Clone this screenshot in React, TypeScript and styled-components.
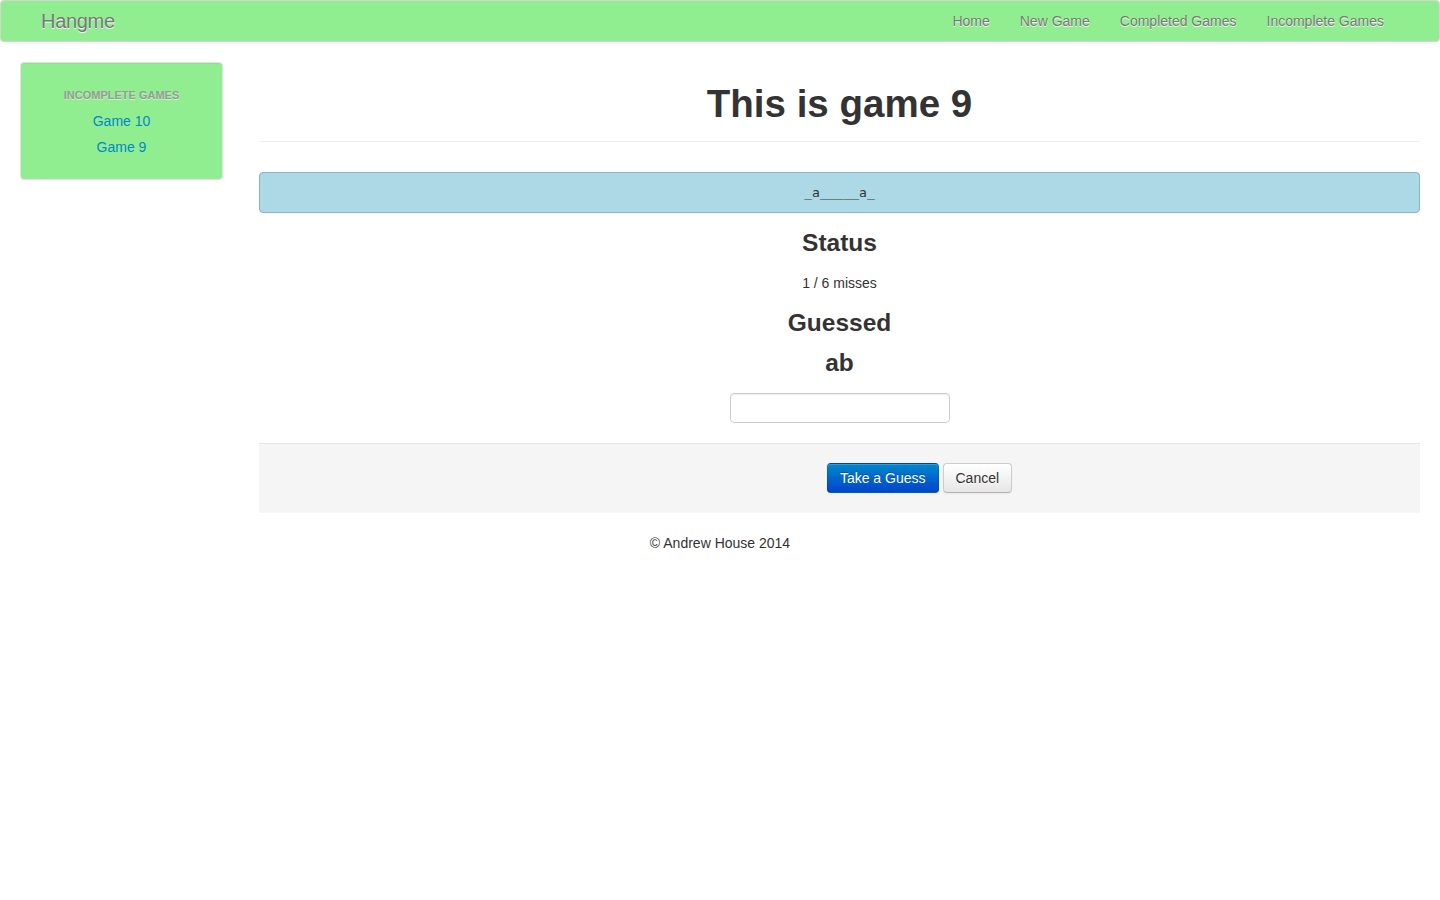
import React from "react";
import styled, { createGlobalStyle } from "styled-components";

const GlobalStyle = createGlobalStyle`
  html, body { margin: 0; padding: 0; background: #fff; }
  body {
    font-family: "Liberation Sans", Arial, "Helvetica Neue", Helvetica, sans-serif;
    font-size: 14px;
    line-height: 20px;
    color: #333;
  }
  * { box-sizing: border-box; }
`;

const Navbar = styled.div`
  height: 42px;
  background: #90ee90;
  border: 1px solid #d4d4d4;
  border-radius: 4px;
  box-shadow: 0 1px 4px rgba(0, 0, 0, 0.065);
  display: flex;
  align-items: center;
  justify-content: space-between;
  padding: 0 40px;
`;

const Brand = styled.a`
  font-size: 20px;
  font-weight: 300;
  line-height: 20px;
  color: #777;
  text-shadow: 0 1px 0 #fff;
  text-decoration: none;
  padding: 10px 0;
  letter-spacing: -0.3px;
`;

const NavList = styled.ul`
  list-style: none;
  margin: 0;
  padding: 0;
  display: flex;
`;

const NavLink = styled.a`
  display: block;
  padding: 10px 15px;
  font-size: 14px;
  line-height: 20px;
  color: #777;
  text-shadow: 0 1px 0 #fff;
  text-decoration: none;
`;

const Container = styled.div`
  display: grid;
  grid-template-columns: 203px 1fr;
  column-gap: 36px;
  padding: 20px 20px 0;
`;

const Well = styled.div`
  align-self: start;
  background: #90ee90;
  border: 1px solid #e3e3e3;
  border-radius: 4px;
  box-shadow: inset 0 1px 1px rgba(0, 0, 0, 0.05);
  padding: 19px 0;
`;

const SideList = styled.ul`
  list-style: none;
  margin: 0;
  padding: 0;
  text-align: center;
`;

const SideHeader = styled.li`
  padding: 3px 15px;
  font-size: 11px;
  font-weight: bold;
  line-height: 20px;
  color: #999;
  text-shadow: 0 1px 0 rgba(255, 255, 255, 0.5);
  text-transform: uppercase;
`;

const SideLink = styled.a`
  display: block;
  padding: 3px 15px;
  color: #0088cc;
  text-decoration: none;
  font-size: 14px;
  line-height: 20px;
`;

const Main = styled.div`
  text-align: center;
`;

const PageHeader = styled.div`
  margin: 22px 0 30px;
  padding-bottom: 17px;
  border-bottom: 1px solid #eee;
`;

const Title = styled.h1`
  margin: 0;
  font-size: 38.5px;
  line-height: 40px;
  font-weight: bold;
  color: #333;
`;

const WordBox = styled.div`
  background: #add8e6;
  border: 1px solid #8ab4c2;
  border-radius: 4px;
  height: 41px;
  display: flex;
  align-items: center;
  justify-content: center;
  font-family: "DejaVu Sans Mono", "Liberation Mono", monospace;
  font-size: 13px;
  color: #333;
  margin-bottom: 10px;
`;

const Heading = styled.h3`
  margin: 0;
  font-size: 24.5px;
  line-height: 40px;
  font-weight: bold;
  color: #333;
`;

const Para = styled.p`
  margin: 10px 0;
  line-height: 20px;
`;

const Input = styled.input`
  display: block;
  margin: 10px auto 20px;
  width: 220px;
  height: 30px;
  padding: 4px 6px;
  border: 1px solid #ccc;
  border-radius: 4px;
  box-shadow: inset 0 1px 1px rgba(0, 0, 0, 0.075);
  font-size: 14px;
`;

const FormActions = styled.div`
  background: #f5f5f5;
  border-top: 1px solid #e5e5e5;
  padding: 19px 20px 20px 180px;
  display: flex;
  justify-content: center;
  gap: 4px;
`;

const Button = styled.button<{ $primary?: boolean }>`
  height: 30px;
  padding: 4px 12px;
  font-family: inherit;
  font-size: 14px;
  line-height: 20px;
  border-radius: 4px;
  cursor: pointer;
  color: ${(p) => (p.$primary ? "#fff" : "#333")};
  text-shadow: ${(p) =>
    p.$primary ? "0 -1px 0 rgba(0,0,0,0.25)" : "0 1px 1px rgba(255,255,255,0.75)"};
  background: ${(p) =>
    p.$primary
      ? "linear-gradient(to bottom, #0088cc, #0044cc)"
      : "linear-gradient(to bottom, #ffffff, #e6e6e6)"};
  border: 1px solid
    ${(p) => (p.$primary ? "rgba(0,0,0,0.1)" : "#ccc")};
  border-bottom-color: ${(p) => (p.$primary ? "rgba(0,0,0,0.25)" : "#b3b3b3")};
  box-shadow: inset 0 1px 0 rgba(255, 255, 255, 0.2), 0 1px 2px rgba(0, 0, 0, 0.05);
`;

const Footer = styled.footer`
  text-align: center;
  margin-top: 20px;
  line-height: 20px;
`;

export default function App() {
  return (
    <>
      <GlobalStyle />
      <Navbar>
        <Brand href="#">Hangme</Brand>
        <NavList>
          <li><NavLink href="#">Home</NavLink></li>
          <li><NavLink href="#">New Game</NavLink></li>
          <li><NavLink href="#">Completed Games</NavLink></li>
          <li><NavLink href="#">Incomplete Games</NavLink></li>
        </NavList>
      </Navbar>
      <Container>
        <Well>
          <SideList>
            <SideHeader>Incomplete Games</SideHeader>
            <li><SideLink href="#">Game 10</SideLink></li>
            <li><SideLink href="#">Game 9</SideLink></li>
          </SideList>
        </Well>
        <Main>
          <PageHeader>
            <Title>This is game 9</Title>
          </PageHeader>
          <WordBox>_a_____a_</WordBox>
          <Heading>Status</Heading>
          <Para>1 / 6 misses</Para>
          <Heading>
            Guessed
            <br />
            ab
          </Heading>
          <Input type="text" />
          <FormActions>
            <Button $primary>Take a Guess</Button>
            <Button>Cancel</Button>
          </FormActions>
        </Main>
      </Container>
      <Footer>© Andrew House 2014</Footer>
    </>
  );
}
